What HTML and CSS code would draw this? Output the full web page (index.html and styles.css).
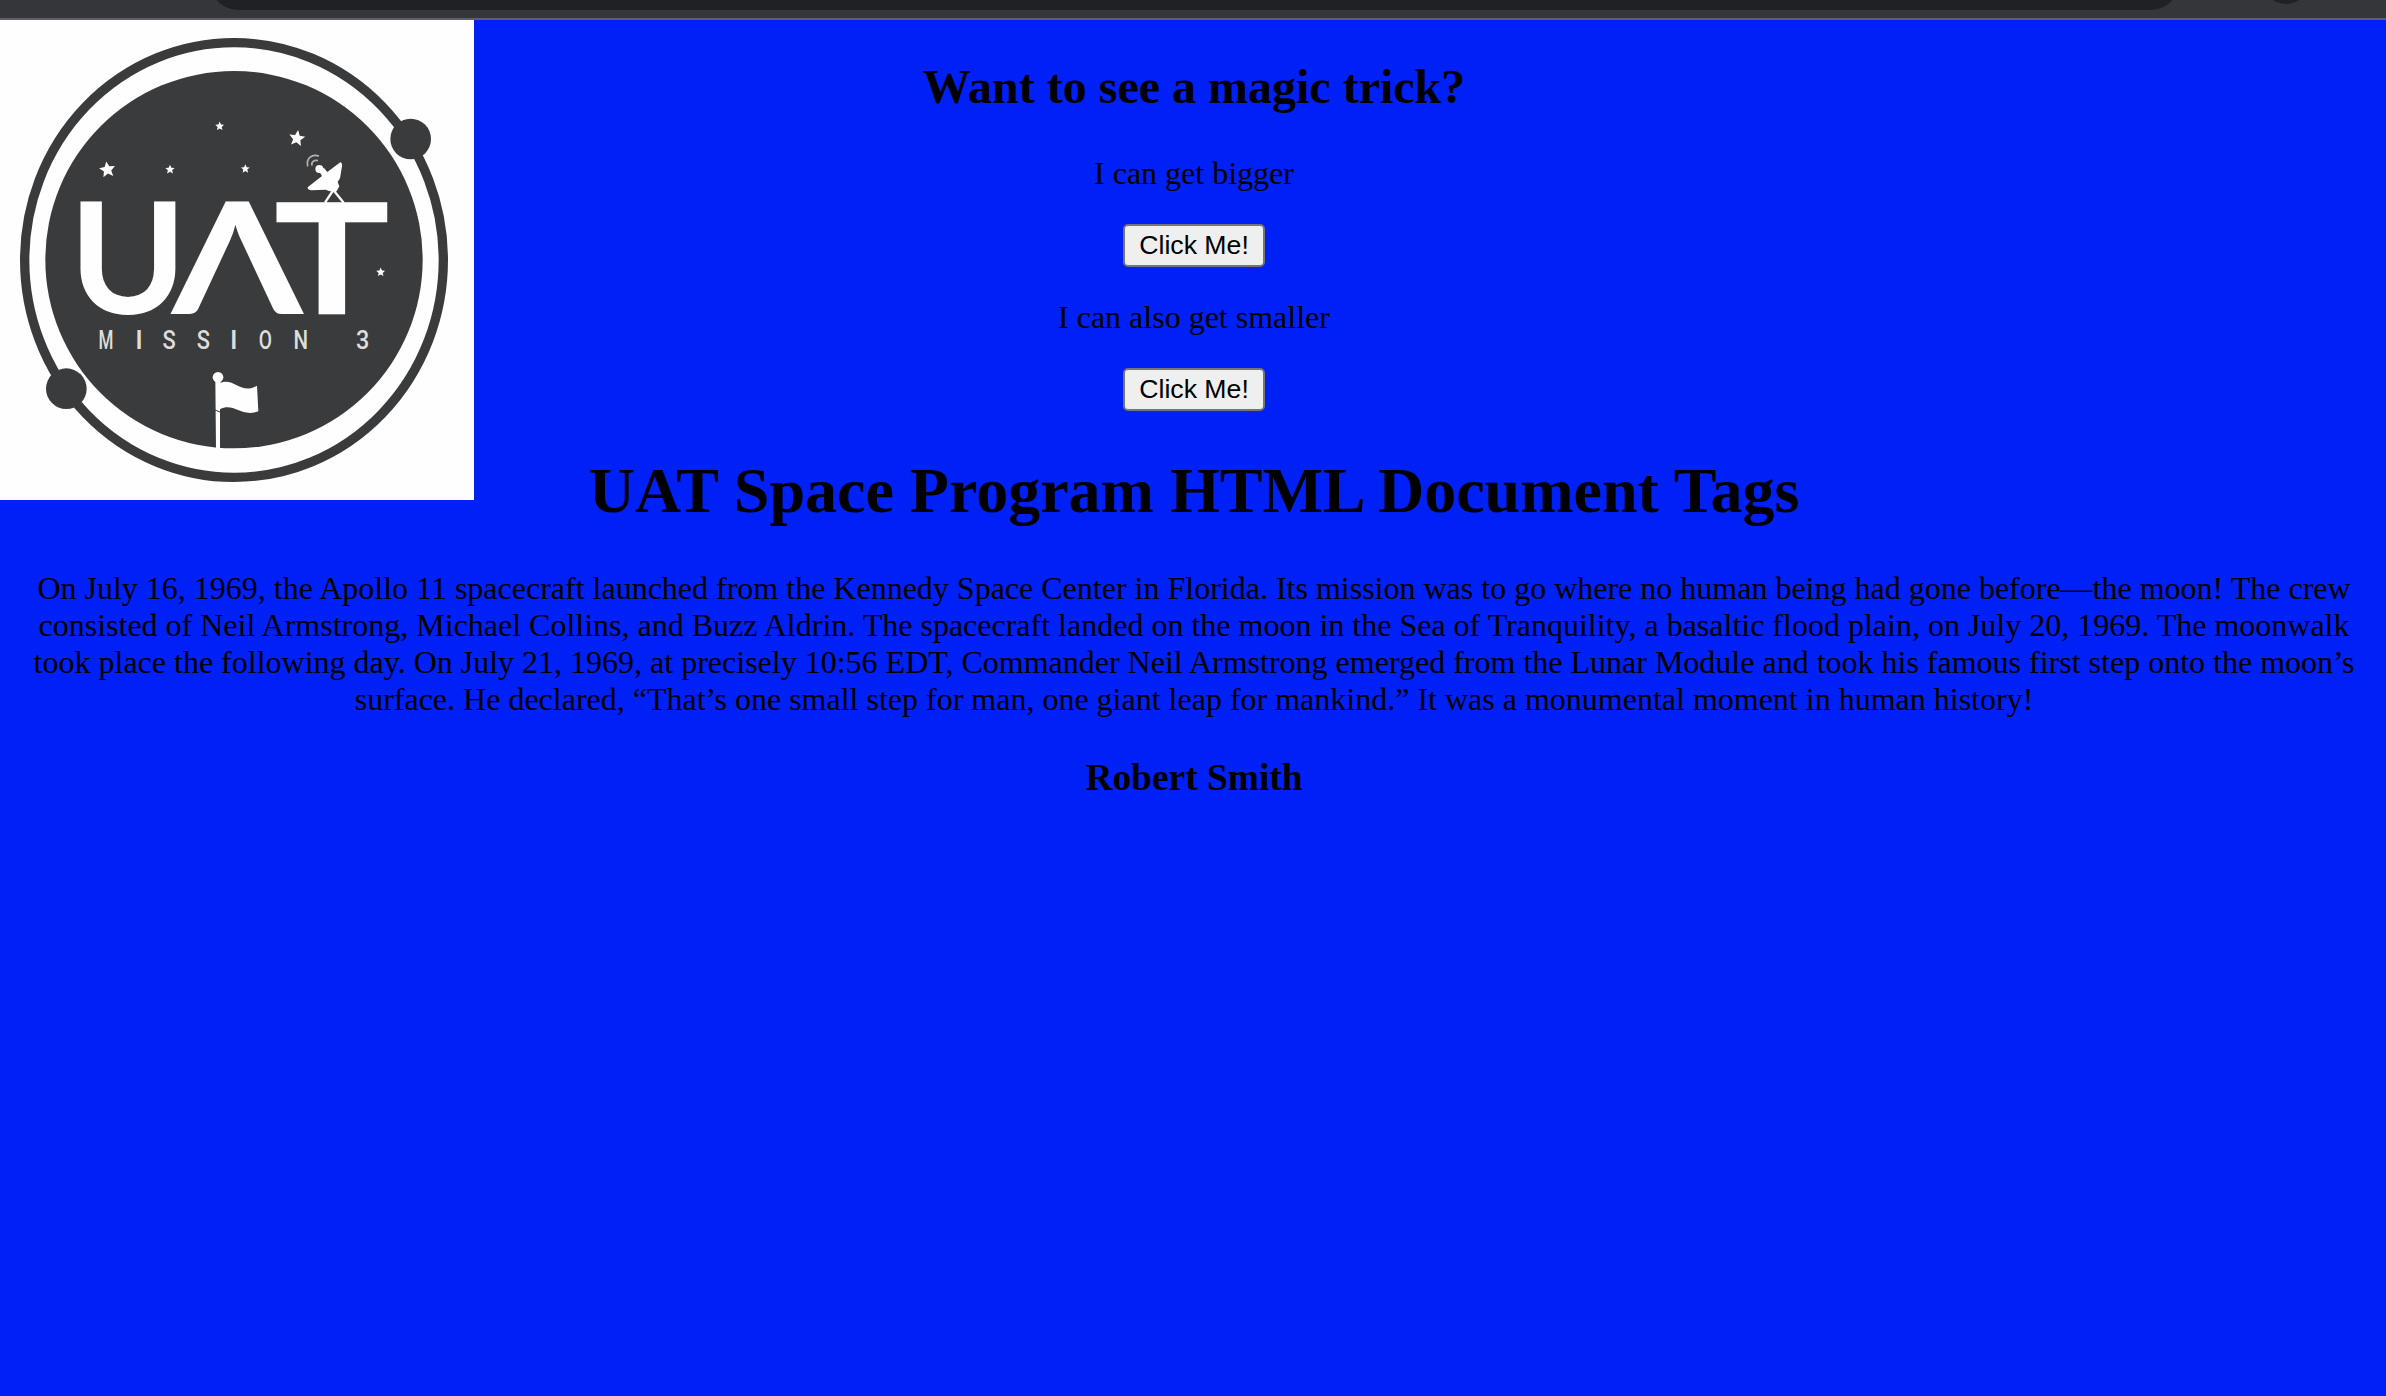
FILE: index.html
```html
<!DOCTYPE html>
<html lang="en">
<head>
<meta charset="utf-8">
<title>UAT Space Program</title>
<link rel="stylesheet" href="styles.css">
</head>
<body>
<div class="toolbar"><div class="address"></div><div class="avatar"></div></div>
<main class="page">
  <svg class="logo" viewBox="0 60 1422 1440" preserveAspectRatio="none" role="img" aria-label="UAT Mission 3">
    <defs><path id="star" d="M0-24 7-8 24-7 11 5 15 22 0 13-15 22-11 5-24-7-7-8Z"/></defs>
    <rect y="60" width="1422" height="1440" fill="#fefefe"/>
    <g fill="#3a3b3d">
      <ellipse cx="702" cy="780" rx="628" ry="652" fill="none" stroke="#3a3b3d" stroke-width="28"/>
      <circle cx="702" cy="779" r="566"/>
      <circle cx="1232" cy="417" r="61"/>
      <circle cx="199" cy="1166" r="61"/>
    </g>
    <g fill="#fefefe">
      <use href="#star" transform="translate(322 508) rotate(-8)"/>
      <use href="#star" transform="translate(891 414) rotate(8)"/>
      <use href="#star" transform="translate(659 378) scale(.55)"/>
      <use href="#star" transform="translate(510 508) scale(.58)"/>
      <use href="#star" transform="translate(736 506) scale(.55)"/>
      <use href="#star" transform="translate(1142 816) scale(.55)"/>
      <circle cx="958" cy="507" r="12"/>
      <path d="M955 510 972 504 982 516 1021 487Q1027 488 1026 499L1020 535 1013 546 1018 559 1010 574 990 574 976 569 935 571Q922 570 923 562L966 528Z"/>
      <path d="M975 608 1000 570 1031 608" fill="none" stroke="#fefefe" stroke-width="7"/>
      <path d="M923 499C918 474 936 461 957 468M936 497C933 485 942 479 954 482" fill="none" stroke="#b5b4b2" stroke-width="5"/>
      <circle cx="654" cy="1132" r="16"/>
      <path d="M646 1140H661V1148C705 1133 724 1186 771 1157L775 1234C722 1253 701 1206 660 1228V1346H648Z"/>
      <path d="M645 1230 660 1236" stroke="#3a3b3d" stroke-width="3"/>
    </g>
    <g class="wordmark">
      <text transform="translate(383.5 943) scale(1.02 1)">U</text>
      <text transform="translate(711.5 943) scale(1.22 1)">Λ</text>
      <text class="tee" transform="translate(995.5 930.5) scale(1.19 1)">T</text>
    </g>
    <g class="mission">
      <text transform="translate(318 1047) scale(.64 1)">M</text>
      <text transform="translate(417 1047)">I</text>
      <text transform="translate(507 1047) scale(.82 1)">S</text>
      <text transform="translate(610 1047) scale(.82 1)">S</text>
      <text transform="translate(701 1047)">I</text>
      <text transform="translate(796 1047) scale(.72 1)">O</text>
      <text transform="translate(902 1047) scale(.77 1)">N</text>
      <text transform="translate(1088 1047) scale(.88 1)">3</text>
    </g>
  </svg>
  <h2>Want to see a magic trick?</h2>
  <p>I can get bigger</p>
  <button type="button">Click Me!</button>
  <p>I can also get smaller</p>
  <button type="button">Click Me!</button>
  <h1>UAT Space Program HTML Document Tags</h1>
  <p class="story">
    <span>On July 16, 1969, the Apollo 11 spacecraft launched from the Kennedy Space Center in Florida. Its mission was to go where no human being had gone before—the moon! The crew</span>
    <span>consisted of Neil Armstrong, Michael Collins, and Buzz Aldrin. The spacecraft landed on the moon in the Sea of Tranquility, a basaltic flood plain, on July 20, 1969. The moonwalk</span>
    <span>took place the following day. On July 21, 1969, at precisely 10:56 EDT, Commander Neil Armstrong emerged from the Lunar Module and took his famous first step onto the moon’s</span>
    <span>surface. He declared, “That’s one small step for man, one giant leap for mankind.” It was a monumental moment in human history!</span>
  </p>
  <h3>Robert Smith</h3>
</main>
</body>
</html>
```
FILE: styles.css
```css
* { box-sizing: border-box; }
body {
  margin: 0;
  height: 1396px;
  overflow: hidden;
  background: #0021f5;
  color: #000;
  font: 32px/37px "Liberation Serif", "Times New Roman", serif;
}
.toolbar {
  display: flex;
  align-items: flex-end;
  gap: 84px;
  height: 20px;
  padding-left: 210px;
  overflow: hidden;
  background: #35363a;
  border-bottom: 2px solid #5f6063;
}
.address {
  flex: none;
  width: 1969px;
  height: 56px;
  margin-bottom: 8px;
  border-radius: 28px;
  background: #202124;
}
.avatar {
  flex: none;
  width: 46px;
  height: 46px;
  margin-bottom: 14px;
  border-radius: 50%;
  background: #202124;
}
.page {
  position: relative;
  display: flex;
  flex-direction: column;
  align-items: center;
  padding: 39px 15px 0 17px;
  text-align: center;
}
.logo {
  position: absolute;
  left: 0;
  top: 0;
  width: 474px;
  height: 480px;
}
.wordmark {
  fill: #fefefe;
  font: 700 465px Lato, sans-serif;
  text-anchor: middle;
}
.tee {
  font: 400 449px "Liberation Sans", Arial, sans-serif;
  stroke: #fefefe;
  stroke-width: 25px;
}
.mission {
  fill: #deddda;
  font: 500 80px Roboto, sans-serif;
  text-anchor: middle;
}
h2 { margin: 0 0 41px; font-size: 48px; line-height: 55px; }
p { margin: 0 0 32px; }
button {
  width: 142px;
  height: 43px;
  margin: 0 0 32px;
  padding: 0;
  border: 2px solid #767676;
  border-radius: 5px;
  background: #efefef;
  color: #000;
  font: 26.667px/37px "Liberation Sans", Arial, sans-serif;
}
h1 { margin: 11px 0 42px; font-size: 64px; line-height: 74px; }
.story { margin-bottom: 38px; }
.story span { display: block; white-space: nowrap; }
h3 { margin: 0; font-size: 37.44px; line-height: 43px; }
```
